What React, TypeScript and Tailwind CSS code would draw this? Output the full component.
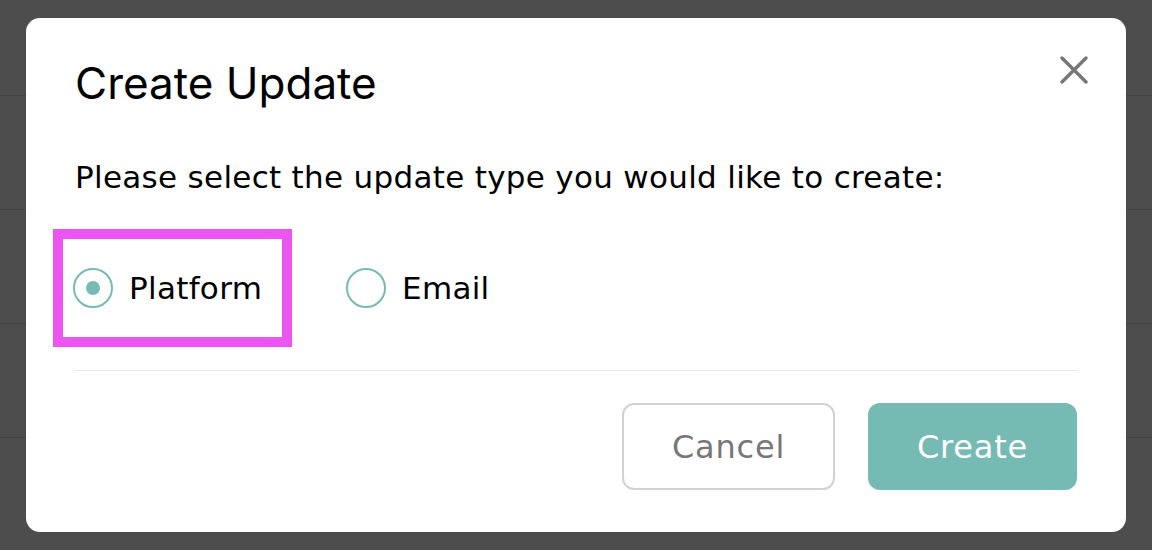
import React, { useState } from 'react';

type Option = { id: string; label: string };

const options: Option[] = [
    { id: 'platform', label: 'Platform' },
    { id: 'email', label: 'Email' },
];

const bodyFont = { fontFamily: '"DejaVu Sans", "Open Sans", sans-serif' };

const Radio: React.FC<{ checked: boolean }> = ({ checked }) => (
    <span className="flex h-[40px] w-[40px] shrink-0 items-center justify-center rounded-full border-2 border-[#76bab4]">
        {checked && <span className="h-[14px] w-[14px] rounded-full bg-[#76bab4]" />}
    </span>
);

const App: React.FC = () => {
    const [selected, setSelected] = useState('platform');

    return (
        <div className="relative h-[550px] w-[1152px] overflow-hidden bg-[#4d4d4d]">
            {/* page behind the overlay */}
            <div className="flex flex-col">
                <div className="h-[96px] border-b border-[#444444]" />
                <div className="h-[114px] border-b border-[#444444]" />
                <div className="h-[114px] border-b border-[#444444]" />
                <div className="h-[114px] border-b border-[#444444]" />
            </div>

            {/* modal */}
            <div className="absolute left-[26px] top-[18px] flex h-[514px] w-[1100px] flex-col rounded-[14px] bg-white px-[49px] pt-[41px]">
                <button className="absolute right-[38px] top-[38px] flex h-[28px] w-[28px] items-center justify-center" aria-label="Close">
                    <svg width="28" height="28" viewBox="0 0 28 28" fill="none" stroke="#777777" strokeWidth={3.4} strokeLinecap="round">
                        <path d="M2 2 26 26M26 2 2 26" />
                    </svg>
                </button>

                <h2
                    className="text-[44px] font-normal leading-[48px] text-black"
                    style={{ fontFamily: 'Inter, "Liberation Sans", sans-serif' }}
                >
                    Create Update
                </h2>

                <p className="mt-[50px] text-[31px] leading-[40px] tracking-[0.3px] text-black" style={bodyFont}>
                    Please select the update type you would like to create:
                </p>

                <div className="mt-[32px] flex items-center" style={bodyFont}>
                    {options.map((opt, i) => (
                        <button
                            key={opt.id}
                            onClick={() => setSelected(opt.id)}
                            className={`flex items-center gap-[16px] text-[31px] tracking-[0.3px] text-black ${
                                i === 0
                                    ? '-ml-[22px] h-[118px] w-[239px] border-[10px] border-[#ec55f0] pl-[10px]'
                                    : 'ml-[54px]'
                            }`}
                        >
                            <Radio checked={selected === opt.id} />
                            <span>{opt.label}</span>
                        </button>
                    ))}
                </div>

                <div className="mt-[23px] h-px bg-[#e6e6ea]" />

                <div className="mt-[32px] flex justify-end gap-[33px]" style={bodyFont}>
                    <button className="h-[87px] w-[213px] rounded-[12px] border-2 border-[#d2d2d2] text-[32px] tracking-[0.8px] text-[#777777]">
                        Cancel
                    </button>
                    <button className="h-[87px] w-[209px] rounded-[12px] bg-[#76bab4] text-[32px] tracking-[0.8px] text-white">
                        Create
                    </button>
                </div>
            </div>
        </div>
    );
};

export default App;
